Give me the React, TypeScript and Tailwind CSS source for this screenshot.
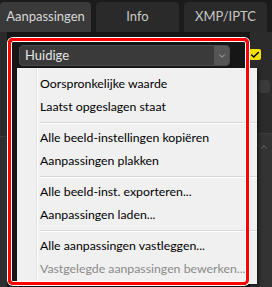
import { ChevronDown, ChevronUp, Check } from "lucide-react";

const items: (string | null)[] = [
  "Oorspronkelijke waarde",
  "Laatst opgeslagen staat",
  null,
  "Alle beeld-instellingen kopiëren",
  "Aanpassingen plakken",
  null,
  "Alle beeld-inst. exporteren...",
  "Aanpassingen laden...",
  null,
  "Alle aanpassingen vastleggen...",
];

const App = () => {
  return (
    <div
      className="relative w-[272px] h-[287px] overflow-hidden bg-[#1b1b1b] text-[12.3px]"
      style={{ fontFamily: "Lato, 'Noto Sans', sans-serif" }}
    >
      {/* Tabs */}
      <div className="flex h-[32px] items-end gap-[5px] pt-[2px]">
        <div className="flex h-[30px] w-[91px] items-center justify-center rounded-t-[4px] bg-[#3a3a3a] text-[13px] text-[#d8d8d8]">
          Aanpassingen
        </div>
        <div className="flex h-[30px] w-[83px] items-center justify-center rounded-t-[4px] bg-[#2a2a2a] text-[13px] text-[#c8c8c8]">
          Info
        </div>
        <div className="flex h-[30px] w-[83px] items-center justify-center rounded-t-[4px] bg-[#2a2a2a] text-[13px] text-[#c8c8c8]">
          XMP/IPTC
        </div>
      </div>

      {/* Panel */}
      <div className="flex h-[255px] bg-[#2b2b2b]">
        {/* left strip */}
        <div className="flex w-[7px] flex-col">
          <div className="h-[104px]" />
          <div className="h-px bg-[#3c3c3c]" />
          <div className="flex-1 bg-[#2f2f2f]" />
        </div>

        {/* framed area */}
        <div className="flex w-[243px] flex-col bg-[#161616] pl-[12px] pt-[13px]">
          <div className="flex h-[21px] w-[211px] items-center justify-between rounded-[4px] border border-[#4a4a4a] bg-[#3a3a3a] pl-[5px]">
            <span className="text-[13px] text-[#e6e6e6]">Huidige</span>
            <div className="flex h-full w-[15px] items-center justify-center rounded-r-[3px] bg-[#555555]">
              <ChevronDown size={10} strokeWidth={2} className="text-[#bdbdbd]" />
            </div>
          </div>
        </div>

        {/* right strip */}
        <div className="flex flex-1 flex-col">
          <div className="mt-[17px] ml-[-1px] flex h-[11px] w-[12px] items-center justify-center rounded-[2px] bg-[#f2e200]">
            <Check size={10} strokeWidth={3.5} className="text-black" />
          </div>
          <div className="mt-[20px] ml-[8px] h-[13px] w-[12px] rounded-[3px] bg-[#3a3a3a]" />
          <div className="mt-[40px] h-px bg-[#3c3c3c]" />
          <div className="flex flex-1 flex-col items-center bg-[#333333] pt-[8px]">
            <ChevronUp size={10} className="ml-[6px] text-[#777777]" />
          </div>
        </div>
      </div>

      {/* Popup menu */}
      <div className="absolute left-[17px] top-[68px] w-[240px] bg-[#f0f0f0] pt-[5px] pb-[3px] shadow-[2px_2px_3px_rgba(0,0,0,0.5)]">
        <div className="absolute left-[19px] top-0 bottom-0 w-px bg-[#e2e2e2]" />
        <div className="absolute left-[20px] top-0 bottom-0 w-px bg-white" />
        {items.map((it, i) =>
          it === null ? (
            <div key={i} className="flex h-[8px] flex-col justify-center pl-[23px]">
              <div className="h-px bg-[#d7d7d7]" />
              <div className="h-px bg-white" />
            </div>
          ) : (
            <div key={i} className="flex h-[23px] items-center pl-[23px] text-[#000000]">
              {it}
            </div>
          )
        )}
        <div className="flex h-[23px] items-center pl-[23px] text-[#8a8a8a]">
          Vastgelegde aanpassingen bewerken...
        </div>
      </div>

      {/* Annotation frame */}
      <div className="pointer-events-none absolute left-[8px] top-[38px] h-[247px] w-[241px] rounded-[5px] border-[3px] border-[#ff0000] shadow-[0_0_0_1px_#ffffff,inset_0_0_0_1px_#ffffff]" />
    </div>
  );
};

export default App;
